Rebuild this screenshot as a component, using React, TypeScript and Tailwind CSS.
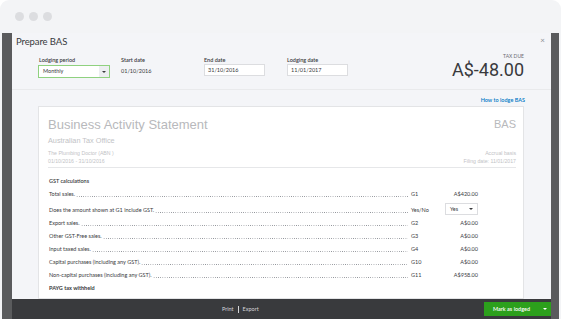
import React from "react";

const ui = { fontFamily: "Lato, 'Open Sans', sans-serif" };
const arial = { fontFamily: "'Liberation Sans', Arial, sans-serif" };
const roboto = { fontFamily: "Roboto, 'Liberation Sans', sans-serif" };

function Leader() {
  return (
    <div className="flex-1 min-w-0 h-[1px] mt-[3px] ml-[1px] mr-[1px] bg-[radial-gradient(circle,#8d9096_0.45px,transparent_0.6px)] bg-[length:2.2px_1px] bg-repeat-x" />
  );
}

function Row({
  label,
  code,
  value,
  bold,
}: {
  label: string;
  code?: string;
  value?: string;
  bold?: boolean;
}) {
  return (
    <div className="flex items-center h-[13px] text-[5.5px] text-[#393a3d]">
      <div className="flex flex-1 min-w-0 items-center">
        <span className={`whitespace-nowrap ${bold ? "font-bold" : ""}`}>{label}</span>
        {code && <Leader />}
      </div>
      {code && (
        <>
          <div className="w-[36px] pl-[2px] shrink-0">{code}</div>
          <div className="w-[33px] text-right shrink-0">{value}</div>
        </>
      )}
    </div>
  );
}

export default function App() {
  return (
    <div className="w-[561px] h-[319px] bg-white overflow-hidden" style={ui}>
      <div className="w-[561px] h-full rounded-t-[9px] bg-[#f3f4f6] flex flex-col">
        {/* title bar */}
        <div className="h-[33px] flex items-center pl-[15px] gap-[5px] shrink-0">
          <div className="w-[9px] h-[9px] rounded-full bg-[#dcdde0]" />
          <div className="w-[9px] h-[9px] rounded-full bg-[#dcdde0]" />
          <div className="w-[9px] h-[9px] rounded-full bg-[#dcdde0]" />
        </div>
        {/* body */}
        <div className="flex-1 min-h-0 px-[2px] flex">
          <div className="w-[557px] bg-[#5a5b5d] pl-[10px] pr-[8px] flex overflow-hidden">
            {/* modal */}
            <div className="w-[539px] bg-[#f4f5f8] flex flex-col overflow-hidden">
              <div className="flex-1 min-h-0 overflow-hidden flex flex-col">
                {/* header */}
                <div className="h-[19px] flex items-center justify-between pl-[4px] pr-[6px] shrink-0">
                  <span className="text-[9.5px] text-[#393a3d] tracking-[-0.1px]">Prepare BAS</span>
                  <span className="text-[8px] leading-none text-[#8d9096] -mt-[6px]">×</span>
                </div>
                {/* form row */}
                <div className="flex items-start pl-[26px] pr-[27px] pt-[4px] pb-[11px] border-b border-[#e9eaec] shrink-0">
                  <div className="flex">
                    <div className="w-[83px]">
                      <div className="h-[9px] text-[5.5px] leading-[9px] font-semibold text-[#393a3d] pl-[1px]">
                        Lodging period
                      </div>
                      <div className="w-[72px] h-[13px] border border-[#8fd17f] bg-white flex items-center">
                        <span className="flex-1 pl-[4px] text-[5.5px] text-[#393a3d]">Monthly</span>
                        <div className="w-[10px] h-full bg-[#eceef1] flex items-center justify-center">
                          <div className="w-0 h-0 border-l-[2px] border-r-[2px] border-t-[2.5px] border-l-transparent border-r-transparent border-t-[#393a3d]" />
                        </div>
                      </div>
                    </div>
                    <div className="w-[83px]">
                      <div className="h-[9px] text-[5.5px] leading-[9px] font-semibold text-[#393a3d]">Start date</div>
                      <div className="h-[13px] flex items-center text-[5.5px] text-[#393a3d]">01/10/2016</div>
                    </div>
                    <div className="w-[83px]">
                      <div className="h-[8px] text-[5.5px] leading-[8px] font-semibold text-[#393a3d]">End date</div>
                      <div className="w-[61px] h-[12px] border border-[#dcdde0] bg-white flex items-center pl-[3px] text-[5.5px] text-[#393a3d]">
                        31/10/2016
                      </div>
                    </div>
                    <div className="w-[83px]">
                      <div className="h-[8px] text-[5.5px] leading-[8px] font-semibold text-[#393a3d]">Lodging date</div>
                      <div className="w-[61px] h-[12px] border border-[#dcdde0] bg-white flex items-center pl-[3px] text-[5.5px] text-[#393a3d]">
                        11/01/2017
                      </div>
                    </div>
                  </div>
                  <div className="flex-1 flex flex-col items-end -mt-[3px] -mb-[2px]">
                    <div className="text-[5px] leading-[6px] text-[#6b6c72]">TAX DUE</div>
                    <div className="text-[18px] leading-[21px] text-[#393a3d]" style={roboto}>
                      A$-48.00
                    </div>
                  </div>
                </div>
                {/* link */}
                <div className="flex justify-end pr-[26px] pt-[6px] pb-[2px] shrink-0">
                  <span className="text-[5.5px] leading-[8px] font-semibold text-[#0077c5]">How to lodge BAS</span>
                </div>
                {/* paper */}
                <div className="ml-[26px] mr-[27px] bg-white border border-[#e3e4e6] pl-[9px] pr-[7px] pt-[10px] flex-1 min-w-0">
                  <div className="flex justify-between items-center h-[15px]" style={arial}>
                    <span className="text-[13px] text-[#b8b9bc]">Business Activity Statement</span>
                    <span className="text-[11px] text-[#b8b9bc]">BAS</span>
                  </div>
                  <div className="text-[7.3px] leading-[9px] mt-[4px] text-[#c2c3c6]" style={arial}>
                    Australian Tax Office
                  </div>
                  <div
                    className="flex justify-between mt-[4px] pb-[2px] border-b border-[#e6e7e9] text-[5.2px] leading-[8px] text-[#c2c3c6]"
                    style={arial}
                  >
                    <div>
                      <div>The Plumbing Doctor (ABN )</div>
                      <div>01/10/2016 - 31/10/2016</div>
                    </div>
                    <div className="text-right">
                      <div>Accrual basis</div>
                      <div>Filing date: 11/01/2017</div>
                    </div>
                  </div>
                  <div className="pl-[1px] pr-[38px] pt-[7px]">
                    <div className="h-[13px] flex items-center text-[5.5px] font-semibold text-[#393a3d]">
                      GST calculations
                    </div>
                    <Row label="Total sales." code="G1" value="A$420.00" />
                    <div className="flex items-center h-[16px] text-[5.5px] text-[#393a3d]">
                      <div className="flex flex-1 min-w-0 items-center pt-[3px]">
                        <span className="whitespace-nowrap">Does the amount shown at G1 include GST.</span>
                        <Leader />
                      </div>
                      <div className="w-[36px] pl-[2px] pt-[3px] shrink-0 whitespace-nowrap">Yes/No</div>
                      <div className="w-[33px] h-[12px] border border-[#dcdde0] bg-white flex items-center justify-between px-[4px] shrink-0">
                        <span>Yes</span>
                        <div className="w-0 h-0 border-l-[2px] border-r-[2px] border-t-[2.5px] border-l-transparent border-r-transparent border-t-[#393a3d]" />
                      </div>
                    </div>
                    <Row label="Export sales." code="G2" value="A$0.00" />
                    <Row label="Other GST-Free sales." code="G3" value="A$0.00" />
                    <Row label="Input taxed sales." code="G4" value="A$0.00" />
                    <Row label="Capital purchases (including any GST)." code="G10" value="A$0.00" />
                    <Row label="Non-capital purchases (including any GST)." code="G11" value="A$958.00" />
                    <Row label="PAYG tax withheld" bold />
                  </div>
                </div>
              </div>
              {/* bottom bar */}
              <div className="h-[20px] bg-[#393a3d] flex items-center shrink-0">
                <div className="flex-1 flex items-center pl-[210px] text-[5.5px] text-[#d4d5d8]">
                  <span>Print</span>
                  <span className="mx-[4px] w-px h-[7px] bg-[#d4d5d8]" />
                  <span>Export</span>
                </div>
                <div className="w-[67px] h-[14px] bg-[#2ca01c] flex items-center text-white text-[5.5px] font-semibold">
                  <span className="flex-1 pl-[9px]">Mark as lodged</span>
                  <div className="w-[12px] flex items-center justify-center">
                    <div className="w-0 h-0 border-l-[2px] border-r-[2px] border-t-[2.5px] border-l-transparent border-r-transparent border-t-white" />
                  </div>
                </div>
              </div>
            </div>
          </div>
        </div>
      </div>
    </div>
  );
}
